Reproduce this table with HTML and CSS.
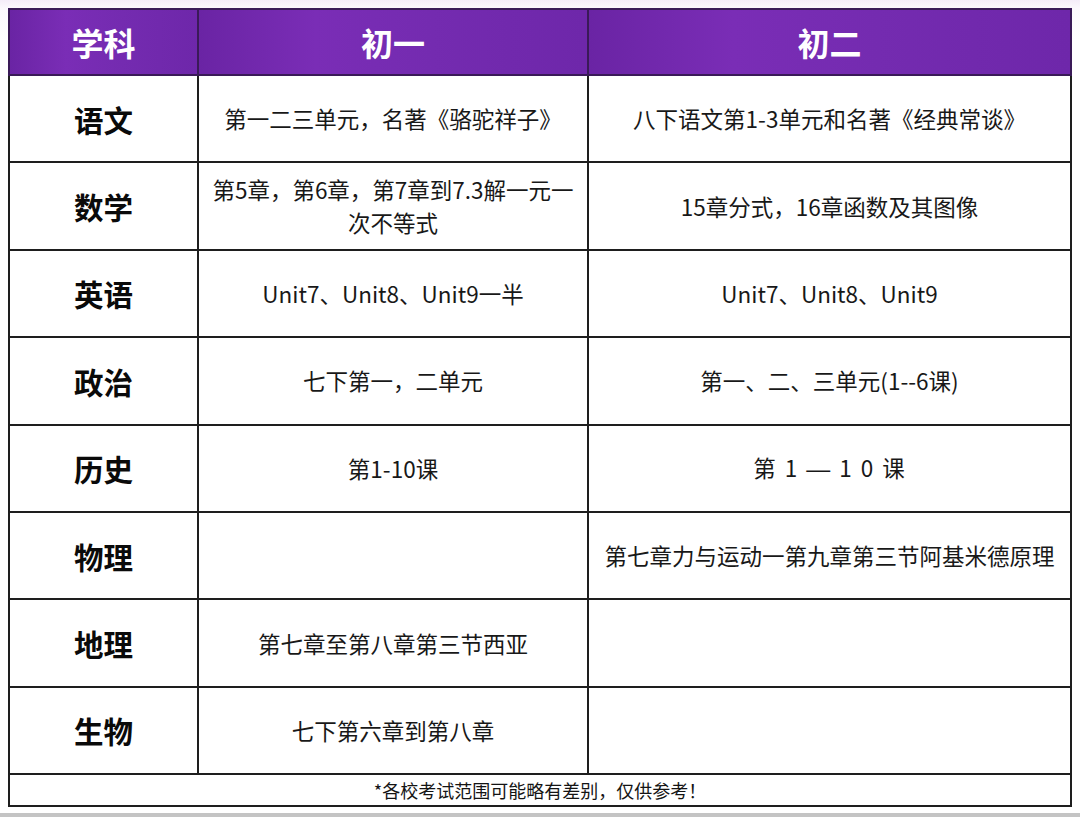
FILE: index.html
```html
<!DOCTYPE html>
<html lang="zh-CN">
<head>
<meta charset="utf-8">
<title>考试范围</title>
<link rel="stylesheet" href="styles.css">
</head>
<body>
<div class="page">
  <table class="scope">
    <colgroup>
      <col class="c-subject">
      <col class="c-g7">
      <col class="c-g8">
    </colgroup>
    <thead>
      <tr class="head-row">
        <th>学科</th>
        <th>初一</th>
        <th>初二</th>
      </tr>
    </thead>
    <tbody>
      <tr><th class="subj">语文</th><td>第一二三单元，名著《骆驼祥子》</td><td>八下语文第1-3单元和名著《经典常谈》</td></tr>
      <tr><th class="subj">数学</th><td class="two-line">第5章，第6章，第7章到7.3解一元一<br>次不等式</td><td>15章分式，16章函数及其图像</td></tr>
      <tr><th class="subj">英语</th><td>Unit7、Unit8、Unit9一半</td><td>Unit7、Unit8、Unit9</td></tr>
      <tr><th class="subj">政治</th><td>七下第一，二单元</td><td>第一、二、三单元(1--6课)</td></tr>
      <tr><th class="subj">历史</th><td>第1-10课</td><td><span class="spaced">第 1 <span class="dash">—</span> 1 0 课</span></td></tr>
      <tr><th class="subj">物理</th><td></td><td>第七章力与运动一第九章第三节阿基米德原理</td></tr>
      <tr><th class="subj">地理</th><td>第七章至第八章第三节西亚</td><td></td></tr>
      <tr><th class="subj">生物</th><td>七下第六章到第八章</td><td></td></tr>
    </tbody>
    <tfoot>
      <tr class="note-row"><td colspan="3">*各校考试范围可能略有差别，仅供参考！</td></tr>
    </tfoot>
  </table>
</div>
<div class="bottom-band"></div>
</body>
</html>
```

FILE: styles.css
```css
html, body {
  margin: 0;
  padding: 0;
}
body {
  width: 1080px;
  height: 817px;
  overflow: hidden;
  background: linear-gradient(180deg, #f4ecf8 0px, #fbf8fc 8px, #ffffff 40px);
  font-family: "Noto Sans CJK SC", "Noto Sans", sans-serif;
  color: #141414;
  position: relative;
}
.page {
  padding: 8px 0 0 8px;
}
.scope {
  border-collapse: collapse;
  table-layout: fixed;
  width: 1062px;
  background: #ffffff;
}
.c-subject { width: 189px; }
.c-g7 { width: 390px; }
.c-g8 { width: 483px; }

.scope td, .scope th {
  border: 2px solid #1e1e1e;
  text-align: center;
  vertical-align: middle;
  padding: 0 6px;
}
.head-row th {
  height: 64px;
  background: linear-gradient(90deg, #6a24a4 0%, #7a2db6 30%, #742bb0 60%, #6e27aa 100%);
  color: #ffffff;
  font-size: 32px;
  font-weight: 700;
  border-color: #3a1a58;
}
tbody tr {
  height: 87.4px;
}
.subj {
  font-size: 29.5px;
  font-weight: 700;
  color: #0a0a0a;
}
tbody td {
  font-size: 22.5px;
  font-weight: 400;
  line-height: 33px;
  color: #181818;
}
.spaced {
  word-spacing: 2px;
  letter-spacing: 1px;
}
.dash {
  font-family: "Liberation Sans", sans-serif;
  font-size: 24px;
}
.note-row td {
  height: 30px;
  font-size: 18px;
  line-height: 20px;
  padding: 0;
}
.bottom-band {
  position: absolute;
  left: 0;
  right: 0;
  bottom: 0;
  height: 4px;
  background: #c4c4c4;
}
```
